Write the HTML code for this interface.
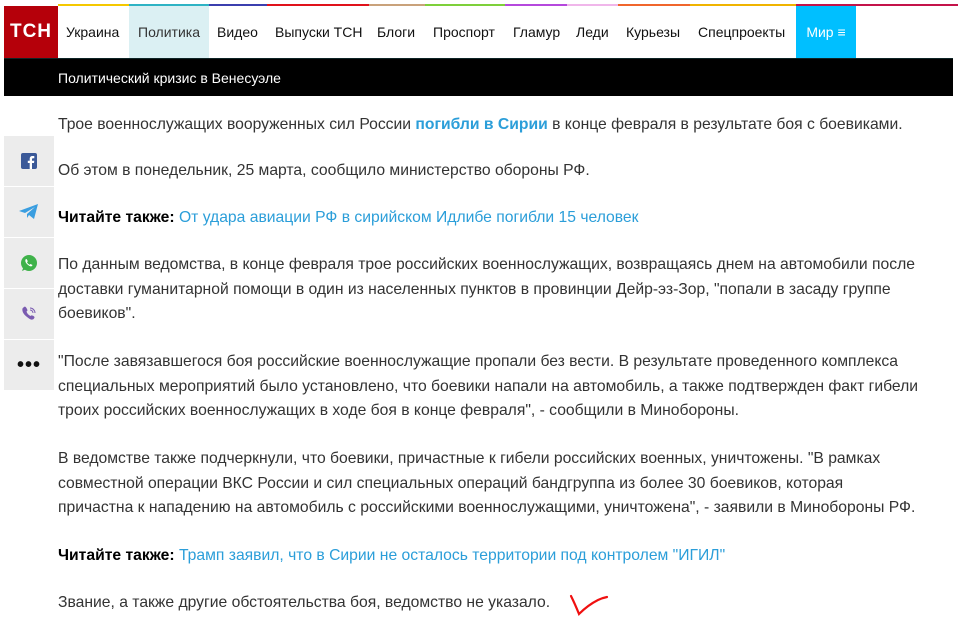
<!DOCTYPE html>
<html><head><meta charset="utf-8"><style>
body{margin:0;width:958px;height:632px;overflow:hidden;background:#fff;font-family:"Liberation Sans",sans-serif;position:relative}
.cb{position:absolute;top:4px;height:2px}
.nav{position:absolute;top:6px;left:0;width:958px;height:52px}
.logo{position:absolute;left:4px;top:0;width:54px;height:52px;background:#b5000a;color:#fff;font-weight:bold;font-size:19px;line-height:52px;text-align:center;letter-spacing:1px}
.ni{position:absolute;top:0;height:52px;line-height:52px;font-size:14px;color:#111}
.bar{position:absolute;left:4px;top:58px;width:949px;height:38px;background:#000;border-top:1px solid #0e2426;box-sizing:border-box}
.bar span{position:absolute;left:54px;top:11px;color:#fff;font-size:14px}
.sh{position:absolute;left:4px;width:50px;height:50px;background:#ececec;display:flex;align-items:center;justify-content:center}
.c{position:absolute;left:58px;width:880px;font-size:15.7px;line-height:24.5px;color:#333}
.c p{margin:0;position:absolute;left:0;width:900px;white-space:nowrap}
a{color:#2b9ed9;text-decoration:none}
b{color:#000}
</style></head><body>
<div class="cb" style="left:58px;width:71px;background:#f5c800"></div>
<div class="cb" style="left:129px;width:80px;background:#2eb3c4"></div>
<div class="cb" style="left:209px;width:58px;background:#3b3fae"></div>
<div class="cb" style="left:267px;width:102px;background:#e0121b"></div>
<div class="cb" style="left:369px;width:56px;background:#c9a27b"></div>
<div class="cb" style="left:425px;width:80px;background:#7ed03a"></div>
<div class="cb" style="left:505px;width:62px;background:#b548dd"></div>
<div class="cb" style="left:567px;width:51px;background:#f0b6ea"></div>
<div class="cb" style="left:618px;width:72px;background:#f0662c"></div>
<div class="cb" style="left:690px;width:106px;background:#f0b400"></div>
<div class="cb" style="left:796px;width:162px;background:#c4134a"></div>
<div class="nav">
<div class="logo">ТСН</div>
<div class="ni" style="left:66px">Украина</div>
<div class="ni" style="left:129px;width:80px;background:#dbf0f3;text-align:center;color:#333">Политика</div>
<div class="ni" style="left:217px">Видео</div>
<div class="ni" style="left:275px">Выпуски ТСН</div>
<div class="ni" style="left:377px">Блоги</div>
<div class="ni" style="left:433px">Проспорт</div>
<div class="ni" style="left:513px">Гламур</div>
<div class="ni" style="left:576px">Леди</div>
<div class="ni" style="left:626px">Курьезы</div>
<div class="ni" style="left:698px">Спецпроекты</div>
<div class="ni" style="left:796px;width:60px;background:#00bfff;color:#fff;text-align:center">Мир ≡</div>
</div>
<div class="bar"><span>Политический кризис в Венесуэле</span></div>
<div class="sh" style="top:136px"><svg width="16" height="16"><rect width="16" height="16" rx="2" fill="#3b5998"/><path d="M11 16V10h2l.3-2.3H11V6.3c0-.7.2-1.1 1.1-1.1h1.2V3.1C13 3 12.3 3 11.5 3 9.8 3 8.7 4 8.7 5.9v1.8H6.8V10h1.9v6z" fill="#fff"/></svg></div>
<div class="sh" style="top:187px"><svg width="20" height="16"><path d="M0 7L19 0 15 15 10 11 8 14 8 10 16 3 6 9z" fill="#3a9ee0"/></svg></div>
<div class="sh" style="top:238px"><svg width="18" height="18"><circle cx="9" cy="9" r="8" fill="#3fb24a"/><path d="M2 17l1.5-4 3 2z" fill="#3fb24a"/><path d="M6 5c-1 1-1 3 1 5s4 3 5 2l.5-1-2-1-1 .8c-1-.5-2-1.5-2.5-2.5l.8-1-1-2z" fill="#fff"/></svg></div>
<div class="sh" style="top:289px"><svg width="16" height="18"><path d="M3 2c1-1 2 0 3 2s0 2-.5 2.5c.5 2 2 3.5 4 4.5.6-.5 1-1 2.5-.2s2 1.5 1 2.7c-1 1.2-2.5 1.8-5 0S2 9 1.5 6 2 3 3 2z" fill="#7a5bb0"/><path d="M9 3a5 5 0 015 5M9 5a3 3 0 013 3" stroke="#7a5bb0" fill="none"/></svg></div>
<div class="sh" style="top:340px;font-size:20px;font-weight:bold;color:#111;letter-spacing:1px">•••</div>
<div class="c" style="top:1px">
<p style="top:112px">Трое военнослужащих вооруженных сил России <a style="font-weight:bold">погибли в Сирии</a> в конце февраля в результате боя с боевиками.</p>
<p style="top:158px">Об этом в понедельник, 25 марта, сообщило министерство обороны РФ.</p>
<p style="top:205px"><b>Читайте также:</b> <a>От удара авиации РФ в сирийском Идлибе погибли 15 человек</a></p>
<p style="top:252px">По данным ведомства, в конце февраля трое российских военнослужащих, возвращаясь днем на автомобили после<br>доставки гуманитарной помощи в один из населенных пунктов в провинции Дейр-эз-Зор, "попали в засаду группе<br>боевиков".</p>
<p style="top:349px">"После завязавшегося боя российские военнослужащие пропали без вести. В результате проведенного комплекса<br>специальных мероприятий было установлено, что боевики напали на автомобиль, а также подтвержден факт гибели<br>троих российских военнослужащих в ходе боя в конце февраля", - сообщили в Минобороны.</p>
<p style="top:446px">В ведомстве также подчеркнули, что боевики, причастные к гибели российских военных, уничтожены. "В рамках<br>совместной операции ВКС России и сил специальных операций бандгруппа из более 30 боевиков, которая<br>причастна к нападению на автомобиль с российскими военнослужащими, уничтожена", - заявили в Минобороны РФ.</p>
<p style="top:543px"><b>Читайте также:</b> <a>Трамп заявил, что в Сирии не осталось территории под контролем "ИГИЛ"</a></p>
<p style="top:590px">Звание, а также другие обстоятельства боя, ведомство не указало.</p>
</div>
<svg style="position:absolute;left:568px;top:592px" width="42" height="26"><path d="M3 4Q7 12 11 22Q20 13 30 8Q34 6 39 5" stroke="#f01010" stroke-width="2.2" fill="none" stroke-linecap="round"/></svg>
</body></html>
